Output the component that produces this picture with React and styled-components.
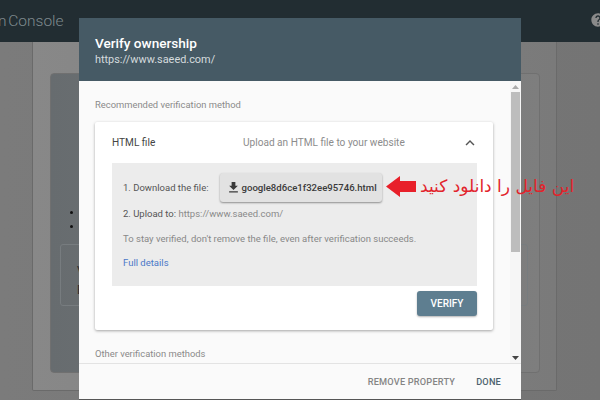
import React from 'react';
import styled, { createGlobalStyle } from 'styled-components';
import { MdFileDownload, MdKeyboardArrowUp, MdHelp } from 'react-icons/md';

//------------------ Styles ----------------------

const GlobalStyle = createGlobalStyle`
  html, body {
    margin: 0;
    padding: 0;
    width: 600px;
    height: 400px;
    overflow: hidden;
    background: #777;
    font-family: Roboto, "Liberation Sans", sans-serif;
  }
`;

const Page = styled.div`
  position: relative;
  width: 600px;
  height: 400px;
  overflow: hidden;
  display: flex;
  flex-direction: column;
  background: linear-gradient(90deg, #7b7b7b, #747474);
`;

const TopBar = styled.header`
  height: 42px;
  flex: none;
  background: #222d32;
  display: flex;
  align-items: center;
  justify-content: space-between;
  overflow: hidden;
`;

const Brand = styled.span`
  margin-left: -2px;
  font-size: 15.5px;
  font-weight: 300;
  word-spacing: -2px;
  color: #7f8a8e;
  white-space: nowrap;
`;

const HelpIcon = styled(MdHelp)`
  font-size: 16px;
  color: #8a8a8a;
  margin-right: -6px;
  transform: translateY(-1px);
`;

const Backdrop = styled.main`
  flex: 1;
  padding: 0 43px 9px 32px;
  display: flex;
`;

const OuterCard = styled.section`
  flex: 1;
  border: 1px solid #6a6a6a;
  border-top: none;
  background: linear-gradient(90deg, #888, #7a7a7a);
  padding: 31px 16px 17px 17px;
  display: flex;
  border-radius: 0 0 2px 2px;
`;

const InnerCard = styled.div`
  flex: 1;
  background: linear-gradient(90deg, #676c6f, #7e7e7e);
  border: 1px solid #707070;
  border-radius: 4px;
  padding: 137px 11px 0 9px;
`;

const Bullets = styled.ul`
  margin: 0 0 16px;
  padding: 0 0 0 10px;
  list-style: none;
  display: flex;
  flex-direction: column;
  gap: 11px;
`;

const Bullet = styled.li`
  width: 3px;
  height: 3px;
  border-radius: 50%;
  background: #111;
`;

const GhostBox = styled.div`
  box-sizing: border-box;
  height: 62px;
  border: 1px solid #777c7f;
  border-radius: 3px;
  padding: 17px 16px;
  font-size: 12px;
  color: #2a2a2a;
  line-height: 19px;
`;

const Modal = styled.div`
  position: absolute;
  left: 79px;
  top: 18px;
  width: 442px;
  height: 381px;
  display: flex;
  flex-direction: column;
  background: #fafafa;
  box-shadow: 0 1px 0 #555;
`;

const ModalHeader = styled.div`
  height: 63px;
  flex: none;
  box-sizing: border-box;
  padding: 16px 16px 0;
  background: #465a65;
`;

const ModalTitle = styled.h2`
  margin: 0;
  font-size: 13.6px;
  line-height: 18px;
  font-weight: 500;
  color: #fff;
`;

const ModalUrl = styled.div`
  font-size: 10.9px;
  line-height: 15px;
  color: #d5dbde;
`;

const ModalBody = styled.div`
  flex: 1;
  min-height: 0;
  display: flex;
  overflow: hidden;
`;

const BodyContent = styled.div`
  flex: 1;
  min-width: 0;
  padding: 15px 17px 0 16px;
`;

const SectionLabel = styled.div`
  font-size: 9.4px;
  line-height: 16px;
  padding-top: 1px;
  color: #8a8a8a;
`;

const MethodCard = styled.div`
  box-sizing: border-box;
  height: 208px;
  margin: 9px 0 15px;
  padding: 0 16px 0 17px;
  background: #fff;
  box-shadow: 0 1px 3px rgba(0, 0, 0, 0.35);
  border-radius: 2px;
`;

const MethodHead = styled.div`
  height: 41px;
  display: flex;
  align-items: center;
  font-size: 10.1px;
  color: #8c8c8c;
`;

const MethodName = styled.span`
  width: 131px;
  flex: none;
  color: #444;
`;

const MethodHint = styled.span`
  flex: 1;
`;

const Chevron = styled(MdKeyboardArrowUp)`
  font-size: 18px;
  color: #555;
  margin-right: -2px;
`;

const StepsPanel = styled.div`
  box-sizing: border-box;
  height: 123px;
  padding: 10px 11px 0;
  background: #ececec;
`;

const StepRow = styled.div`
  display: flex;
  align-items: center;
  gap: 11px;
  font-size: 9.5px;
  color: ${props => props.$muted ? '#888' : '#555'};
  min-height: ${props => props.$height}px;
`;

const StepText = styled.span`
  color: #8a8a8a;
`;

const Strong = styled.span`
  color: #555;
`;

const DownloadButton = styled.button`
  box-sizing: border-box;
  width: 162px;
  height: 29px;
  padding: 0 0 0 6px;
  border: none;
  border-radius: 3px;
  background: #e2e2e2;
  box-shadow: 0 1px 2px rgba(0, 0, 0, 0.4);
  display: flex;
  align-items: center;
  gap: 1px;
  font-family: inherit;
  font-size: 9.6px;
  font-weight: 500;
  color: #3a3a3a;
  white-space: nowrap;
`;

const FullDetails = styled.a`
  font-size: 9.5px;
  color: #4a78c8;
  text-decoration: none;
`;

const CardActions = styled.div`
  display: flex;
  justify-content: flex-end;
  padding-top: 5px;
`;

const VerifyButton = styled.button`
  width: 60px;
  height: 25px;
  padding: 0;
  border: none;
  border-radius: 3px;
  background: #5e7e90;
  box-shadow: 0 1px 2px rgba(0, 0, 0, 0.3);
  font-family: inherit;
  font-size: 10px;
  font-weight: 500;
  color: #fff;
`;

const Scrollbar = styled.div`
  width: 11px;
  flex: none;
  padding-top: 4px;
  display: flex;
  flex-direction: column;
  align-items: center;
  justify-content: space-between;
  box-sizing: border-box;
  height: 100%;
  background: #f6f6f6;
  position: relative;
`;

const Thumb = styled.div`
  position: absolute;
  left: 1px;
  top: 11px;
  width: 9px;
  height: 160px;
  background: #bdbdbd;
`;

const ScrollArrow = styled.svg`
  width: 7px;
  height: 4px;
  margin: 0 0 3px;
`;

const ModalFooter = styled.div`
  height: 36px;
  flex: none;
  box-sizing: border-box;
  padding: 0 20px 0 0;
  display: flex;
  align-items: center;
  justify-content: flex-end;
  gap: 21px;
  background: #fafafa;
  border-top: 1px solid #e3e3e3;
`;

const FooterAction = styled.span`
  font-size: 9.2px;
  font-weight: 500;
  letter-spacing: 0.2px;
  color: ${props => props.$primary ? '#4d626e' : '#858585'};
`;

const Callout = styled.div`
  position: absolute;
  left: 386px;
  top: 176px;
  width: 190px;
  display: flex;
  align-items: center;
  gap: 4px;
`;

const CalloutText = styled.span`
  direction: rtl;
  font-family: "DejaVu Sans", sans-serif;
  font-size: 17px;
  line-height: 21px;
  color: #e2232b;
  white-space: nowrap;
`;

//------------------ Component --------------------

const App = () => (
  <Page>
    <GlobalStyle />

    <TopBar>
      <Brand>n Console</Brand>
      <HelpIcon />
    </TopBar>

    <Backdrop>
      <OuterCard>
        <InnerCard>
          <Bullets>
            <Bullet />
            <Bullet />
          </Bullets>
          <GhostBox>
            V<br />E
          </GhostBox>
        </InnerCard>
      </OuterCard>
    </Backdrop>

    <Modal>
      <ModalHeader>
        <ModalTitle>Verify ownership</ModalTitle>
        <ModalUrl>https://www.saeed.com/</ModalUrl>
      </ModalHeader>

      <ModalBody>
        <BodyContent>
          <SectionLabel>Recommended verification method</SectionLabel>

          <MethodCard>
            <MethodHead>
              <MethodName>HTML file</MethodName>
              <MethodHint>Upload an HTML file to your website</MethodHint>
              <Chevron />
            </MethodHead>

            <StepsPanel>
              <StepRow $height={29}>
                <Strong>1. Download the file:</Strong>
                <DownloadButton>
                  <MdFileDownload size={15} />
                  google8d6ce1f32ee95746.html
                </DownloadButton>
              </StepRow>
              <StepRow $height={22}>
                <span>
                  <Strong>2. Upload to:</Strong> <StepText>https://www.saeed.com/</StepText>
                </span>
              </StepRow>
              <StepRow $height={28} $muted>
                To stay verified, don't remove the file, even after verification succeeds.
              </StepRow>
              <StepRow $height={21}>
                <FullDetails>Full details</FullDetails>
              </StepRow>
            </StepsPanel>

            <CardActions>
              <VerifyButton>VERIFY</VerifyButton>
            </CardActions>
          </MethodCard>

          <SectionLabel>Other verification methods</SectionLabel>
        </BodyContent>

        <Scrollbar>
          <Thumb />
          <ScrollArrow viewBox="0 0 7 4">
            <path d="M3.5 0 7 4H0z" fill="#aaa" />
          </ScrollArrow>
          <ScrollArrow viewBox="0 0 7 4">
            <path d="M0 0h7L3.5 4z" fill="#444" />
          </ScrollArrow>
        </Scrollbar>
      </ModalBody>

      <ModalFooter>
        <FooterAction>REMOVE PROPERTY</FooterAction>
        <FooterAction $primary>DONE</FooterAction>
      </ModalFooter>
    </Modal>

    <Callout>
      <svg width="30" height="21" viewBox="0 0 30 21">
        <path d="M0 10.5 14 0v5h16v11H14v5z" fill="#e8202a" />
      </svg>
      <CalloutText>این فایل را دانلود کنید</CalloutText>
    </Callout>
  </Page>
);

export default App;
